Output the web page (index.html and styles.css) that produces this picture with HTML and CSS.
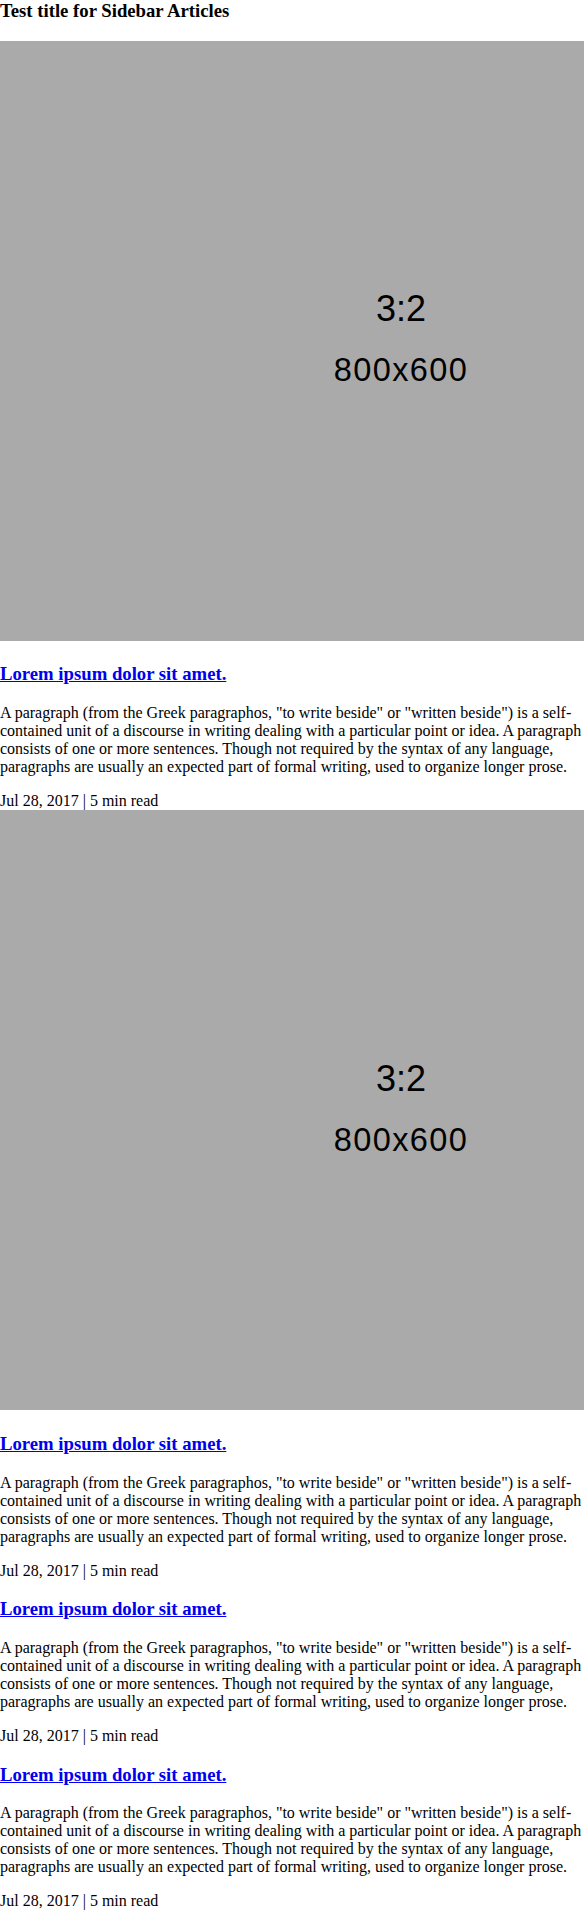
FILE: index.html
```html
<!DOCTYPE html>
<html lang="en">
<head>
<meta charset="utf-8">
<title>Sidebar Articles</title>
<link rel="stylesheet" href="styles.css">
</head>
<body>
<h3 class="sidebar-title">Test title for Sidebar Articles</h3>

<div class="article">
  <div class="thumb-wrap"><span class="thumb"><span class="thumb-inner"><span class="thumb-ratio">3:2</span><span class="thumb-size">800x600</span></span></span></div>
  <h3 class="article-title"><a href="#">Lorem ipsum dolor sit amet.</a></h3>
  <p class="article-text">A paragraph (from the Greek paragraphos, "to write beside" or "written beside") is a self-contained unit of a discourse in writing dealing with a particular point or idea. A paragraph consists of one or more sentences. Though not required by the syntax of any language, paragraphs are usually an expected part of formal writing, used to organize longer prose.</p>
  <p class="article-meta">Jul 28, 2017 | 5 min read</p>
</div>

<div class="article">
  <div class="thumb-wrap"><span class="thumb"><span class="thumb-inner"><span class="thumb-ratio">3:2</span><span class="thumb-size">800x600</span></span></span></div>
  <h3 class="article-title"><a href="#">Lorem ipsum dolor sit amet.</a></h3>
  <p class="article-text">A paragraph (from the Greek paragraphos, "to write beside" or "written beside") is a self-contained unit of a discourse in writing dealing with a particular point or idea. A paragraph consists of one or more sentences. Though not required by the syntax of any language, paragraphs are usually an expected part of formal writing, used to organize longer prose.</p>
  <p class="article-meta">Jul 28, 2017 | 5 min read</p>
</div>

<div class="article">
  <h3 class="article-title"><a href="#">Lorem ipsum dolor sit amet.</a></h3>
  <p class="article-text">A paragraph (from the Greek paragraphos, "to write beside" or "written beside") is a self-contained unit of a discourse in writing dealing with a particular point or idea. A paragraph consists of one or more sentences. Though not required by the syntax of any language, paragraphs are usually an expected part of formal writing, used to organize longer prose.</p>
  <p class="article-meta">Jul 28, 2017 | 5 min read</p>
</div>

<div class="article">
  <h3 class="article-title"><a href="#">Lorem ipsum dolor sit amet.</a></h3>
  <p class="article-text">A paragraph (from the Greek paragraphos, "to write beside" or "written beside") is a self-contained unit of a discourse in writing dealing with a particular point or idea. A paragraph consists of one or more sentences. Though not required by the syntax of any language, paragraphs are usually an expected part of formal writing, used to organize longer prose.</p>
  <p class="article-meta">Jul 28, 2017 | 5 min read</p>
</div>

<div class="article">
  <h3 class="article-title"><a href="#">Lorem ipsum dolor sit amet.</a></h3>
  <p class="article-text">A paragraph (from the Greek paragraphos, "to write beside" or "written beside") is a self-contained unit of a discourse in writing dealing with a particular point or idea. A paragraph consists of one or more sentences. Though not required by the syntax of any language, paragraphs are usually an expected part of formal writing, used to organize longer prose.</p>
  <p class="article-meta">Jul 28, 2017 | 5 min read</p>
</div>
</body>
</html>
```
FILE: styles.css
```css
html {
  overflow-x: hidden;
}

body {
  margin: 0;
  font-family: "Liberation Serif", "Times New Roman", serif;
  font-size: 16px;
  color: #000;
  background: #fff;
}

.sidebar-title {
  margin: 0 0 1em;
  font-size: 1.17em;
  font-weight: bold;
}

.thumb-wrap {
  white-space: nowrap;
}

.thumb {
  display: inline-block;
  width: 800px;
  height: 600px;
  overflow: hidden;
  vertical-align: baseline;
  background: #aaaaaa;
}

.thumb-inner {
  display: flex;
  flex-direction: column;
  align-items: center;
  justify-content: center;
  gap: 27px;
  height: 100%;
  padding-left: 2px;
  padding-bottom: 3px;
  box-sizing: border-box;
  color: #000;
  font-family: "Liberation Sans", Arial, sans-serif;
}

.thumb-ratio {
  font-size: 36px;
  line-height: 1;
}

.thumb-size {
  font-size: 32.5px;
  line-height: 1;
  letter-spacing: 1.4px;
}

.article-title {
  margin: 1em 0;
  font-size: 1.17em;
  font-weight: bold;
}

.article-title a {
  color: #0000ee;
  text-decoration: underline;
}

.article-text {
  margin: 0 0 1em;
}

.article-meta {
  margin: 0;
}
```
